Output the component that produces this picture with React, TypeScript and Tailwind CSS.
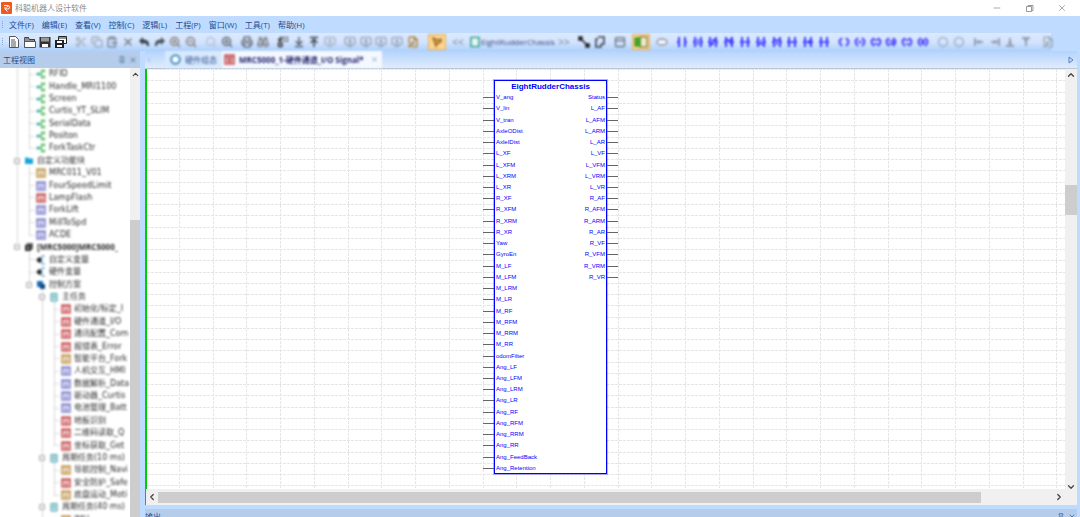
import type { ReactNode } from 'react';
import clsx from 'clsx';
import {
  ArrowDownToLine, ArrowUpToLine, ChevronDown, ChevronLeft, ChevronRight, ChevronUp, ClipboardPaste, Copy,
  Binoculars, Minus, MonitorDown, Pin, Printer, Scissors, Search, X, ZoomIn, ZoomOut,
  PanelTop, Replace, FilePen, type LucideIcon,
} from 'lucide-react';

const menus = ['文件(F)', '编辑(E)', '查看(V)', '控制(C)', '逻辑(L)', '工程(P)', '窗口(W)', '工具(T)', '帮助(H)'];

const inputs = [
  'V_ang', 'V_lin', 'V_tran', 'AxleODist', 'AxleIDist', 'L_XF', 'L_XFM', 'L_XRM', 'L_XR', 'R_XF', 'R_XFM', 'R_XRM',
  'R_XR', 'Yaw', 'GyroEn', 'M_LF', 'M_LFM', 'M_LRM', 'M_LR', 'M_RF', 'M_RFM', 'M_RRM', 'M_RR', 'odomFilter',
  'Ang_LF', 'Ang_LFM', 'Ang_LRM', 'Ang_LR', 'Ang_RF', 'Ang_RFM', 'Ang_RRM', 'Ang_RR', 'Ang_FeedBack', 'Ang_Retention',
];

const outputs = [
  'Status', 'L_AF', 'L_AFM', 'L_ARM', 'L_AR', 'L_VF', 'L_VFM', 'L_VRM', 'L_VR', 'R_AF', 'R_AFM', 'R_ARM', 'R_AR',
  'R_VF', 'R_VFM', 'R_VRM', 'R_VR',
];

type Kind = 'share' | 'folder' | 'tan' | 'violet' | 'red' | 'chip' | 'var' | 'plan' | 'task';

interface TreeItem {
  label: string;
  kind: Kind;
  level: 0 | 1 | 2 | 3;
  open?: boolean;
  bold?: boolean;
}

const tree: TreeItem[] = [
  { label: 'RFID', kind: 'share', level: 1 },
  { label: 'Handle_MRI1100', kind: 'share', level: 1 },
  { label: 'Screen', kind: 'share', level: 1 },
  { label: 'Curtis_YT_SLIM', kind: 'share', level: 1 },
  { label: 'SerialData', kind: 'share', level: 1 },
  { label: 'Positon', kind: 'share', level: 1 },
  { label: 'ForkTaskCtr', kind: 'share', level: 1 },
  { label: '自定义功能块', kind: 'folder', level: 0, open: true },
  { label: 'MRC011_V01', kind: 'tan', level: 1 },
  { label: 'FourSpeedLimit', kind: 'violet', level: 1 },
  { label: 'LampFlash', kind: 'red', level: 1 },
  { label: 'ForkLift', kind: 'violet', level: 1 },
  { label: 'MillToSpd', kind: 'violet', level: 1 },
  { label: 'ACDE', kind: 'violet', level: 1 },
  { label: '[MRC5000]MRC5000_', kind: 'chip', level: 0, open: true, bold: true },
  { label: '自定义变量', kind: 'var', level: 1 },
  { label: '硬件变量', kind: 'var', level: 1 },
  { label: '控制方案', kind: 'plan', level: 1, open: true },
  { label: '主任务', kind: 'task', level: 2, open: true },
  { label: '初始化/标定_I', kind: 'red', level: 3 },
  { label: '硬件通道_I/O', kind: 'red', level: 3 },
  { label: '通讯配置_Com', kind: 'red', level: 3 },
  { label: '报错表_Error', kind: 'red', level: 3 },
  { label: '智能平台_Fork', kind: 'tan', level: 3 },
  { label: '人机交互_HMI', kind: 'violet', level: 3 },
  { label: '数据解析_Data', kind: 'violet', level: 3 },
  { label: '驱动器_Curtis', kind: 'violet', level: 3 },
  { label: '电池管理_Batt', kind: 'violet', level: 3 },
  { label: '地板识别', kind: 'red', level: 3 },
  { label: '二维码读取_Q', kind: 'red', level: 3 },
  { label: '坐标获取_Get', kind: 'red', level: 3 },
  { label: '周期任务(10 ms)', kind: 'task', level: 2, open: true },
  { label: '导航控制_Navi', kind: 'tan', level: 3 },
  { label: '安全防护_Safe', kind: 'red', level: 3 },
  { label: '底盘运动_Moti', kind: 'tan', level: 3 },
  { label: '周期任务(40 ms)', kind: 'task', level: 2, open: true },
  { label: 'IMU', kind: 'tan', level: 3 },
];

const indent = ['pl-[13px]', 'pl-[25px]', 'pl-[38px]', 'pl-[50px]'];

const blockColors: Record<string, string> = { tan: '#c39a52', violet: '#8585cf', red: '#c95458', task: '#3d9aa8' };

const KindIcon = ({ kind }: { kind: Kind }) => {
  if (kind === 'share') {
    return (
      <svg width="10" height="10" viewBox="0 0 10 10" className="shrink-0" fill="none">
        <path d="M1 5h4M8 1.5H5.5v7H8" stroke="#55b96a" strokeWidth="1.4" />
        <circle cx="2" cy="5" r="1.6" fill="#2fa3a3" />
        <circle cx="8" cy="2" r="1.4" fill="#62c462" />
        <circle cx="8" cy="8" r="1.4" fill="#62c462" />
      </svg>
    );
  }
  if (kind === 'folder') {
    return (
      <svg width="10" height="10" viewBox="0 0 10 10" className="shrink-0">
        <path d="M1 1.5h3l1 1h4v5.5H1z" fill="#18a4dc" />
      </svg>
    );
  }
  if (kind === 'chip') {
    return (
      <svg width="10" height="10" viewBox="0 0 10 10" className="shrink-0">
        <path d="M2.5 1H9v6.5H2.5z" fill="#666" />
        <path d="M1 3h6v6H1z" fill="#333" />
        <path d="M3 5h2v2H3z" fill="#aaa" />
      </svg>
    );
  }
  if (kind === 'var') {
    return (
      <svg width="10" height="10" viewBox="0 0 10 10" className="shrink-0" fill="none">
        <path d="M0 5h2M2 3h3v4H2z" fill="#222" stroke="#222" />
        <path d="M9 1H6v8h3" stroke="#7fb6de" strokeWidth="1.3" />
      </svg>
    );
  }
  if (kind === 'plan') {
    return (
      <svg width="10" height="10" viewBox="0 0 10 10" className="shrink-0">
        <path d="M1 1h6v6H1z" fill="#1b6fb5" />
        <path d="M4 4h5v5H4z" fill="#134e86" />
      </svg>
    );
  }
  if (kind === 'task') {
    return (
      <svg width="10" height="10" viewBox="0 0 10 10" className="shrink-0" fill="#d8edf0" stroke={blockColors.task}>
        <path d="M2 1.500h6v7.500H2zM3.500 4h3M3.500 6h3" />
      </svg>
    );
  }
  const color = blockColors[kind];
  return (
    <svg width="10" height="10" viewBox="0 0 10 10" className="shrink-0" fill="none">
      <path d="M1 1h8v8H1z" stroke={color} strokeWidth="1.6" fill={color} fillOpacity="0.15" />
      <path d="M1 2.5h8M3.5 5h3v2.500h-3z" stroke={color} />
    </svg>
  );
};

const ToolButton = ({ label, active, children }: { label: string; active?: boolean; children: ReactNode }) => (
  <button
    type="button"
    aria-label={label}
    className={clsx('flex h-4 flex-1 items-center justify-center', active && 'border border-[#e0b060] bg-[#ffd58c]')}
  >
    {children}
  </button>
);

const Group = ({ className, children }: { className: string; children: ReactNode }) => (
  <div className={clsx('flex shrink-0', className)}>{children}</div>
);

const IconGroup = ({ className, icons }: { className: string; icons: [string, LucideIcon, string][] }) => (
  <Group className={className}>
    {icons.map(([label, Icon, color]) => (
      <ToolButton key={label} label={label}>
        <Icon size={12} color={color} strokeWidth={3} />
      </ToolButton>
    ))}
  </Group>
);

// Ladder contacts, each one differs by the mark between its two rails
const contactMarks = ['', 'M6 3v6', 'M4 9l4-6M6 3v6', 'M4 3l2 3 2-3v6', 'M4 6h4', 'M4 8h4M6 4v4', 'M4 4h4M6 4v5', 'M4 6h4M6 5v2', 'M4 6h4M7 4v4', 'M4 6h4'];
const coilMarks = ['', 'M4 6h4', 'M4 4h4M4 8h4', 'M4 5h4v3H4', 'M4 4h4M5 8h3', 'M6 3v6M4 5h4M4 7h4'];

const Contact = ({ mark }: { mark: string }) => (
  <svg width="12" height="12" viewBox="0 0 12 12" fill="none" stroke="#3c3cff" strokeWidth="2">
    <path d="M3 1v10M9 1v10M1 6h2M9 6h2" />
    <path d={mark} strokeWidth="1.6" />
  </svg>
);

const Coil = ({ mark }: { mark: string }) => (
  <svg width="14" height="12" viewBox="0 0 14 12" fill="none" stroke="#4a42fa" strokeWidth="2">
    <path d="M5 2Q0 6 5 10M9 2Q14 6 9 10" />
    <path d={mark} transform="translate(1 0)" strokeWidth="1.7" />
  </svg>
);

const junctions = ['M2 2v8M2 6h8M6 4v4', 'M10 2v8M10 6H2M6 4v4', 'M2 10h8M6 10V2M4 7h4', 'M2 2h8M6 2v8M4 4h4'];

const FileTools = () => (
  <Group className="w-[63px]">
    <ToolButton label="新建">
      <svg width="10" height="12" viewBox="0 0 10 12" fill="#fff" stroke="#555">
        <path d="M.5.5h6l3 3v8h-9z" />
        <path d="M2 4h4M2 6h5M2 8h5M2 10h5" />
      </svg>
    </ToolButton>
    <ToolButton label="打开">
      <svg width="12" height="12" viewBox="0 0 12 12" fill="#fff" stroke="#555">
        <path d="M.5 11.5v-10h4l1 2h5v2M.5 11.5v-6h11v6z" />
        <path d="M1 2h4M1 4h10" stroke="#222" />
      </svg>
    </ToolButton>
    <ToolButton label="保存">
      <svg width="12" height="12" viewBox="0 0 12 12">
        <path d="M.5 1h11v10.500H.5z" fill="#333" />
        <path d="M2 1.500h8v4H2z" fill="#999" />
        <path d="M3 8h6v3H3z" fill="#fff" />
      </svg>
    </ToolButton>
    <ToolButton label="全部保存">
      <svg width="12" height="12" viewBox="0 0 12 12">
        <path d="M3.500.5h8v7h-8z" fill="#fff" stroke="#222" />
        <path d="M4 2h7" stroke="#222" />
        <path d="M0 4h9v8H0z" fill="#222" />
        <path d="M2 5h5v2H2zM2 9h5v2H2z" fill="#fff" />
      </svg>
    </ToolButton>
  </Group>
);

const Toolbar = () => (
  <div role="toolbar" className="flex h-[18px] items-center bg-linear-to-b from-[#dce9fe] via-[#d3e4fd] to-[#aed0fb]">
    <Grip />
    <FileTools />
    <div className="ml-1 flex gap-1 blur-[1px]">
      <Group className="w-[126px]">
        {([
          ['剪切', Scissors, '#a7b4c4'], ['复制', Copy, '#a3afbf'], ['粘贴', ClipboardPaste, '#7f8c9e'], ['删除', X, '#75808f'],
        ] as [string, LucideIcon, string][]).map(([label, Icon, color]) => (
          <ToolButton key={label} label={label}>
            <Icon size={12} color={color} strokeWidth={3} />
          </ToolButton>
        ))}
        <ToolButton label="撤销">
          <svg width="12" height="12" viewBox="0 0 12 12" fill="#38404a">
            <path d="M1 5l4-4v2.500q6 0 6 5V10H9q0-3-4-3v2z" />
          </svg>
        </ToolButton>
        <ToolButton label="重做">
          <svg width="12" height="12" viewBox="0 0 12 12" fill="#4b545f">
            <path d="M11 5L7 1v2.500q-6 0-6 5V10h2q0-3 4-3v2z" />
          </svg>
        </ToolButton>
        <ToolButton label="放大">
          <ZoomIn size={12} color="#85807a" strokeWidth={3} />
        </ToolButton>
        <ToolButton label="缩小">
          <ZoomOut size={12} color="#85807a" strokeWidth={3} />
        </ToolButton>
      </Group>
      <IconGroup className="w-8" icons={[['适合', Search, '#b3c2d6'], ['查看页', ZoomIn, '#5f6670']]} />
      <IconGroup className="w-8" icons={[['打印', Printer, '#6c747e'], ['查找', Binoculars, '#858b92']]} />
      <IconGroup
        className="w-[63px]"
        icons={[
          ['编译', Replace, '#333'], ['上载', ArrowDownToLine, '#58626e'], ['下载', ArrowUpToLine, '#333d48'],
          ['在线', MonitorDown, '#a9b8cc'],
        ]}
      />
      <IconGroup
        className="w-[79px]"
        icons={[
          ['运行', MonitorDown, '#9aaabf'], ['停止', MonitorDown, '#9aaabf'], ['复位', MonitorDown, '#9aaabf'],
          ['调试', MonitorDown, '#9aaabf'], ['编辑页', FilePen, '#b58b45'],
        ]}
      />
      <Group className="ml-[3px] w-[18px]">
        <ToolButton label="选择" active>
          <svg width="12" height="12" viewBox="0 0 12 12" fill="#e0a03a" stroke="#9a6f35" strokeWidth="1.5">
            <path d="M2 2l3 8 2-3 3-1V3L7 4z" />
          </svg>
        </ToolButton>
      </Group>
      <Group className="w-4 text-[10px] text-[#6c7a8e]">
        <ToolButton label="上一个">&lt;&lt;</ToolButton>
      </Group>
      <button type="button" className="flex h-4 w-[82px] items-center gap-px text-[8px] whitespace-nowrap text-[#34447e]">
        <svg width="10" height="12" viewBox="0 0 10 12" className="shrink-0" fill="#e8f7f5" stroke="#36a394" strokeWidth="1.6">
          <path d="M1 1.500h8v9H1z" />
        </svg>
        EightRudderChassis
      </button>
      <Group className="w-4 text-[10px] text-[#6c7a8e]">
        <ToolButton label="下一个">&gt;&gt;</ToolButton>
      </Group>
      <Group className="w-8">
        <ToolButton label="连线">
          <svg width="12" height="12" viewBox="0 0 12 12" fill="#222" stroke="#222">
            <path d="M1 1h3v3H1zM8 8h3v3H8zM3 3l6 6" strokeWidth="1.5" />
          </svg>
        </ToolButton>
        <ToolButton label="多段线">
          <svg width="12" height="12" viewBox="0 0 12 12" fill="none" stroke="#3c444e" strokeWidth="1.6">
            <path d="M4 1h6v7H7M4 3H2v8h5V8" />
          </svg>
        </ToolButton>
      </Group>
      <Group className="w-4">
        <ToolButton label="功能块">
          <PanelTop size={12} color="#646d78" strokeWidth={2.5} />
        </ToolButton>
      </Group>
      <Group className="w-[18px]">
        <ToolButton label="变量" active>
          <svg width="14" height="12" viewBox="0 0 14 12" fill="#f4e8cb" stroke="#8b8b58" strokeWidth="1.4">
            <path d="M6 1h7v10H6z" />
            <path d="M1 2h5v8H1z" fill="#41a524" stroke="#4c9c2b" />
          </svg>
        </ToolButton>
      </Group>
      <Group className="w-4">
        <ToolButton label="注释">
          <svg width="12" height="12" viewBox="0 0 12 12" fill="#f3f6fa" stroke="#8a939e" strokeWidth="1.4">
            <ellipse cx="6" cy="6" rx="5" ry="3" />
          </svg>
        </ToolButton>
      </Group>
      <Group className="w-[158px]">
        {contactMarks.map((mark, i) => (
          <ToolButton key={i} label={`触点 ${i + 1}`}>
            <Contact mark={mark} />
          </ToolButton>
        ))}
      </Group>
      <Group className="w-[95px]">
        {coilMarks.map((mark, i) => (
          <ToolButton key={i} label={`线圈 ${i + 1}`}>
            <Coil mark={mark} />
          </ToolButton>
        ))}
      </Group>
      <Group className="w-8">
        {['跳转', '返回'].map((label) => (
          <ToolButton key={label} label={label}>
            <svg width="12" height="12" viewBox="0 0 12 12" fill="none" stroke="#9fb0c6" strokeWidth="1.5">
              <circle cx="6" cy="6" r="4.500" />
            </svg>
          </ToolButton>
        ))}
      </Group>
      <Group className="w-[63px]">
        {junctions.map((d, i) => (
          <ToolButton key={d} label={`分支 ${i + 1}`}>
            <svg width="12" height="12" viewBox="0 0 12 12" fill="none" stroke="#93a1b4" strokeWidth="2">
              <path d={d} />
            </svg>
          </ToolButton>
        ))}
      </Group>
      <Group className="w-5">
        <ToolButton label="属性">
          <FilePen size={12} color="#939fae" strokeWidth={2.5} />
        </ToolButton>
      </Group>
    </div>
  </div>
);

const Grip = () => (
  <svg width="6" height="10" viewBox="0 0 6 10" className="shrink-0" fill="#7fa6dc">
    <path d="M2 1h1v1H2zM2 3h1v1H2zM2 5h1v1H2zM2 7h1v1H2z" />
  </svg>
);

const TitleBar = () => (
  <header className="flex h-4 shrink-0 items-center bg-white pl-px">
    <svg width="11" height="12" viewBox="0 0 11 12">
      <rect width="11" height="12" rx="1" fill="#f05a22" />
      <path d="M3 3.500h3.500q2 0 2 1.800T6.500 7H4M4 7l2.500 2.500M3 6h3" stroke="#fff" fill="none" />
      <circle cx="6.500" cy="4.500" r=".7" fill="#fff" />
    </svg>
    <h1 className="ml-[3px] text-[8px] text-[#8b8b8b]">科聪机器人设计软件</h1>
    <div className="ml-auto flex items-center gap-[23px] pr-[13px] text-[#999]">
      <button type="button" aria-label="最小化">
        <Minus size={10} strokeWidth={2} />
      </button>
      <button type="button" aria-label="还原">
        <svg width="9" height="9" viewBox="0 0 9 9" fill="none" stroke="currentColor">
          <path d="M1.500 2.500h5v5h-5zM3 2.500v-1h5v5H6.500" />
        </svg>
      </button>
      <button type="button" aria-label="关闭">
        <X size={10} strokeWidth={2} />
      </button>
    </div>
  </header>
);

const TreeLines = () => (
  <svg className="absolute inset-0 size-full" stroke="#d9d9d9" fill="none">
    <path d="M17.500 0v175M29.500 0v80M29.500 98v69M29.500 184v32M42.500 222v240M54.500 234v143M54.500 394v33" />
  </svg>
);

const ProjectPanel = () => (
  <aside className="flex w-[140px] shrink-0 flex-col overflow-hidden">
    <div className="flex h-[17px] shrink-0 items-center bg-[#b5cdea] px-[3px] text-[8px] text-[#1d4b93]">
      <h2>工程视图</h2>
      <div className="ml-auto flex gap-[3px] text-[#54789f] blur-[1px]">
        <button type="button" aria-label="固定">
          <Pin size={8} strokeWidth={3} />
        </button>
        <button type="button" aria-label="关闭面板">
          <X size={8} strokeWidth={3} />
        </button>
      </div>
    </div>
    <div className="flex min-h-0 flex-1 overflow-hidden">
      <div className="min-w-0 flex-1 overflow-hidden bg-white">
        <div className="relative blur-[1px]">
          <TreeLines />
          <ul className="relative grid h-[458px] grid-rows-37">
            {tree.map((item) => (
              <li
                key={item.label}
                className={clsx(
                  'flex items-center gap-[2px] text-[8px] leading-3 whitespace-nowrap text-[#2a2a2a]',
                  indent[item.level],
                  item.bold ? 'font-bold' : "font-['DejaVu_Sans','Noto_Sans_CJK_SC',sans-serif]",
                )}
              >
                <span className="flex w-[9px] shrink-0 items-center">
                  {item.open ? (
                    <svg width="8" height="8" viewBox="0 0 8 8" fill="#fff" stroke="#adadad">
                      <path d="M1.500 1.500h5v5h-5zM2.500 4h3" />
                    </svg>
                  ) : (
                    <span className="ml-1 w-[5px] border-t border-dotted border-[#bbb]" />
                  )}
                </span>
                <KindIcon kind={item.kind} />
                <span className="pl-px">{item.label}</span>
              </li>
            ))}
          </ul>
        </div>
      </div>
      <div className="flex w-[10px] shrink-0 flex-col items-center bg-[#f0f0f0]">
        <button type="button" aria-label="向上滚动" className="flex h-3 items-center text-[#444]">
          <ChevronUp size={9} strokeWidth={3} />
        </button>
        <div className="mt-[140px] w-full flex-1 bg-[#cdcdcd]" />
      </div>
    </div>
  </aside>
);

const TabBar = () => (
  <div className="flex h-[18px] shrink-0 items-center border-b border-[#b9c6d8] bg-linear-to-b from-[#b3d3fc] to-[#e0ecfd] text-[8px]">
    <div className="flex h-full items-center blur-[1px]">
      <button type="button" aria-label="向左" className="w-5 text-[#7d9fd0]">
        <ChevronLeft size={8} />
      </button>
      <button type="button" className="flex h-full w-[57px] items-center justify-center gap-1 bg-[#d9e9fd] text-[#35548f]">
        <svg width="11" height="11" viewBox="0 0 11 11" fill="#fff" stroke="#438ebd" strokeWidth="2">
          <circle cx="5.500" cy="5.500" r="4.300" />
        </svg>
        硬件组态
      </button>
      <div className="flex h-full w-[160px] items-center bg-[#f5f9ff] pl-[2px]">
        <button type="button" className="flex items-center gap-1 font-bold whitespace-nowrap text-[#20206c]">
          <svg width="11" height="11" viewBox="0 0 11 11" fill="#f1cfd0" stroke="#c4575b" strokeWidth="1.6">
            <path d="M1 1h9v9H1zM1 3h9M4 5h3v3H4z" />
          </svg>
          MRC5000_1-硬件通道_I/O Signal*
        </button>
        <button type="button" aria-label="关闭标签" className="ml-auto pr-1 text-[#6f94ba]">
          <X size={7} strokeWidth={3} />
        </button>
      </div>
    </div>
    <button type="button" aria-label="向右" className="ml-auto pr-[3px] text-[#5682c4]">
      <svg width="6" height="8" viewBox="0 0 6 8" fill="#c7ddfa" stroke="currentColor">
        <path d="M1 1l4 3-4 3z" />
      </svg>
    </button>
  </div>
);

// The grid step is 11.25px down and three times that across
const GridLines = () => (
  <svg className="block size-full" stroke="#e6e6e6" strokeDasharray="3 1">
    {Array.from({ length: 90 }, (_, i) => {
      const y = Math.round(i * 11.25) + 0.5;
      return <line key={`r${i}`} x1="0" x2="100%" y1={y} y2={y} />;
    })}
    {Array.from({ length: 80 }, (_, i) => {
      const x = Math.round((i + 1) * 33.75 - 2) + 0.5;
      return <line key={`c${i}`} x1={x} x2={x} y1="0" y2="100%" />;
    })}
  </svg>
);

const Wires = ({ pins }: { pins: string[] }) => (
  <div className="mt-3 grid h-[382px] w-[11px] grid-rows-34">
    {pins.map((pin) => (
      <span key={pin} className="flex items-center">
        <span className="h-px w-full bg-[#666]" />
      </span>
    ))}
  </div>
);

const FunctionBlock = () => (
  <div className="absolute top-[11px] left-[336px] flex items-start font-['Liberation_Sans',sans-serif] text-[#0000ff]">
    <Wires pins={inputs} />
    <section className="w-[113px] border border-[#0000ff] bg-white outline outline-[#0000ff]/30">
      <h2 className="h-[11px] text-center text-[8px] leading-[11px] font-bold">EightRudderChassis</h2>
      <div className="flex h-[381px] justify-between px-px text-[6px]">
        <ul className="grid h-[382px] grid-rows-34">
          {inputs.map((pin) => (
            <li key={pin} className="flex items-center">{pin}</li>
          ))}
        </ul>
        <ul className="grid h-[382px] grid-rows-34 text-right">
          {outputs.map((pin) => (
            <li key={pin} className="flex items-center justify-end">{pin}</li>
          ))}
        </ul>
      </div>
    </section>
    <Wires pins={outputs} />
  </div>
);

const Editor = () => (
  <div className="flex min-h-0 flex-1 bg-[#f0f0f0]">
    <div className="flex min-w-0 flex-1 flex-col">
      <div className="relative min-h-0 flex-1 overflow-hidden border-l-2 border-[#0c0] bg-white">
        <GridLines />
        <FunctionBlock />
      </div>
      <div className="flex h-4 shrink-0 items-center border-l border-[#777] text-[#444]">
        <button type="button" aria-label="向左滚动" className="px-px">
          <ChevronLeft size={10} strokeWidth={3} />
        </button>
        <div className="flex h-[11px] flex-1">
          <div className="w-[92%] bg-[#cdcdcd]" />
        </div>
        <button type="button" aria-label="向右滚动" className="px-px">
          <ChevronRight size={10} strokeWidth={3} />
        </button>
      </div>
    </div>
    <div className="flex w-3 shrink-0 flex-col items-center pb-3 text-[#444]">
      <button type="button" aria-label="向上滚动画布" className="flex h-3 items-center">
        <ChevronUp size={10} strokeWidth={3} />
      </button>
      <div className="flex w-full flex-1 flex-col pt-[104px]">
        <div className="h-[30px] bg-[#cdcdcd]" />
      </div>
      <button type="button" aria-label="向下滚动画布" className="flex h-3 items-center">
        <ChevronDown size={10} strokeWidth={3} />
      </button>
    </div>
  </div>
);

const OutputPanel = () => (
  <div className="mt-1 flex h-2 shrink-0 items-start overflow-hidden bg-[#b5cdea] pr-px text-[8px] leading-4 text-[#1d4b93]">
    <h2>输出</h2>
    <div className="ml-auto flex gap-[3px] pt-1">
      <button type="button" aria-label="固定输出">
        <Pin size={8} strokeWidth={2} />
      </button>
      <button type="button" aria-label="关闭输出">
        <X size={8} strokeWidth={2} />
      </button>
    </div>
  </div>
);

const App = () => (
  <div className="flex h-screen flex-col overflow-hidden bg-[#bfdbff] font-['Open_Sans','Noto_Sans_CJK_SC',sans-serif]">
    <TitleBar />
    <nav className="flex h-[17px] shrink-0 items-center">
      <Grip />
      <div className="flex gap-2 pl-[3px] text-[8px] text-[#1d4b93]">
        {menus.map((menu) => (
          <button key={menu} type="button">{menu}</button>
        ))}
      </div>
    </nav>
    <div className="shrink-0 pr-[29px]">
      <Toolbar />
    </div>
    <div className="flex min-h-0 flex-1">
      <ProjectPanel />
      <main className="ml-[5px] flex min-w-0 flex-1 flex-col pr-[3px]">
        <TabBar />
        <Editor />
        <OutputPanel />
      </main>
    </div>
  </div>
);

export default App;
